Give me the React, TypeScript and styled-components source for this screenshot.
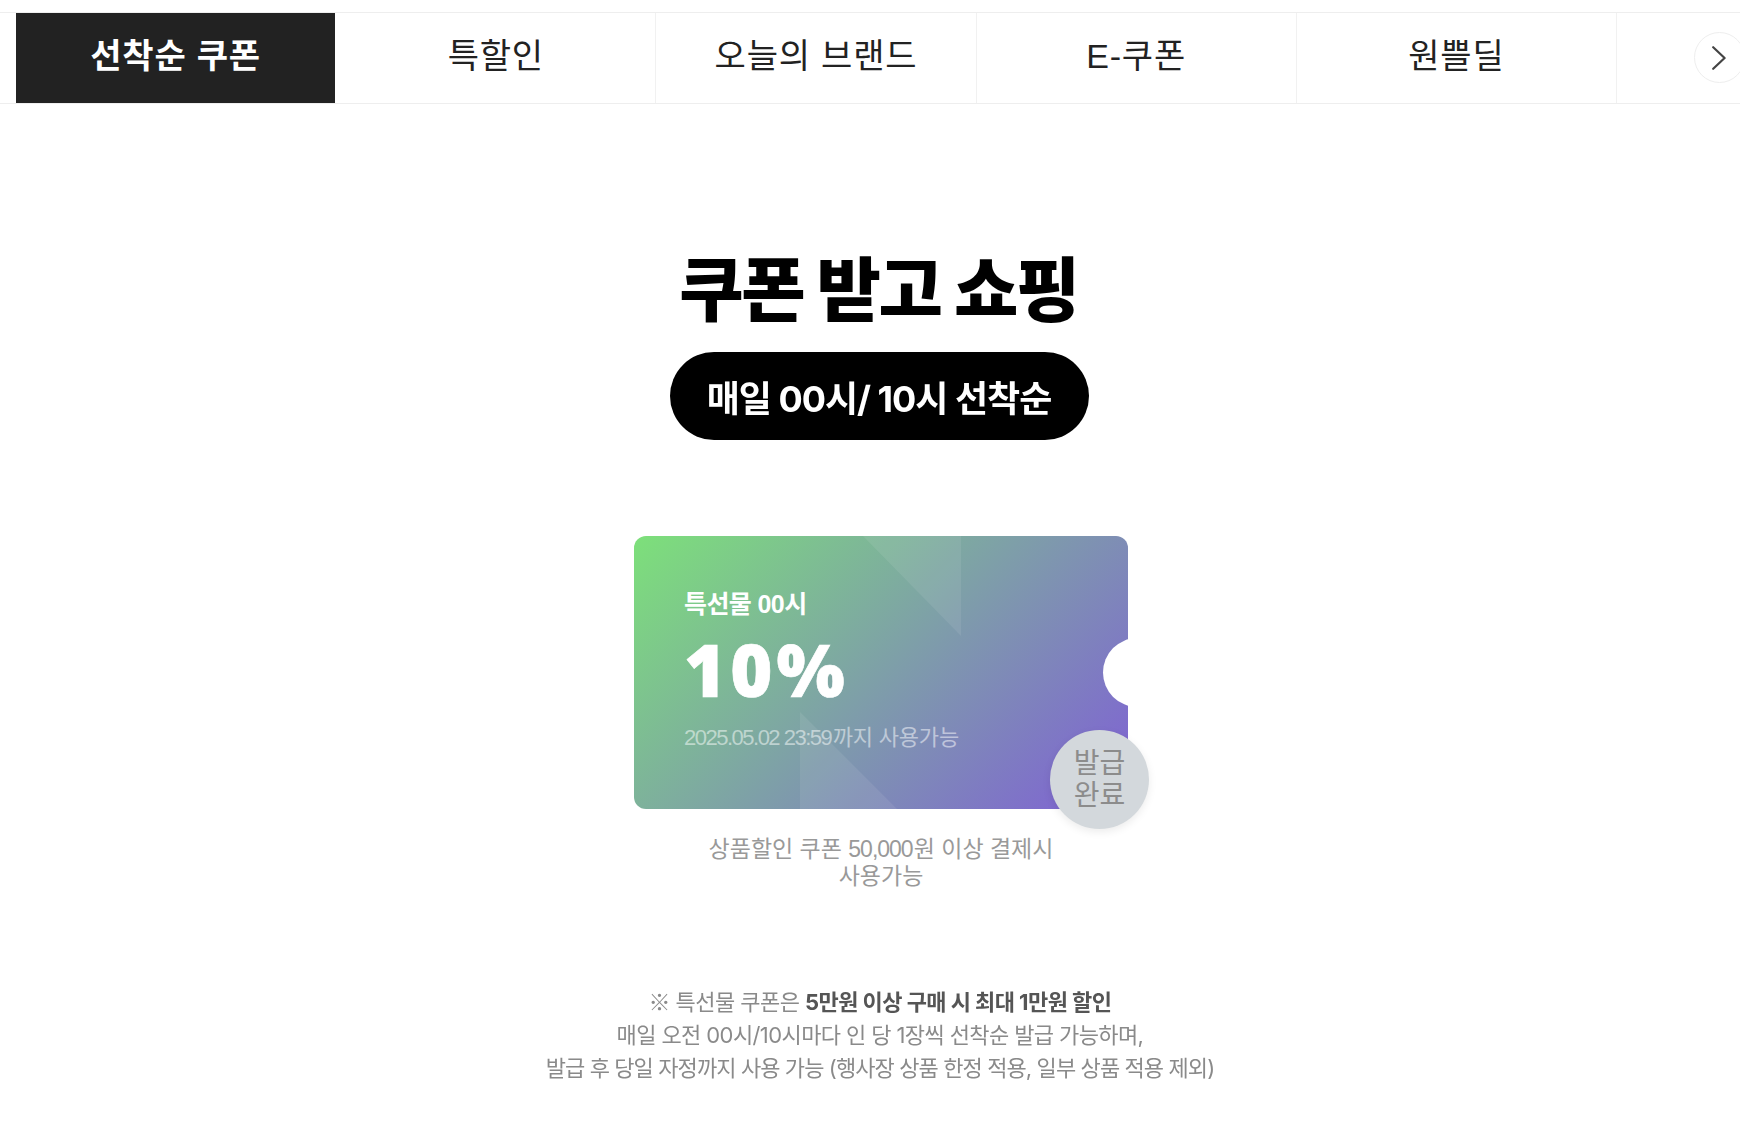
import React from "react";
import styled, { createGlobalStyle } from "styled-components";

const GlobalStyle = createGlobalStyle`
  html, body {
    margin: 0;
    padding: 0;
    background: #fff;
    overflow: hidden;
  }
  body {
    font-family: "Liberation Sans", "Noto Sans CJK KR", sans-serif;
  }
`;

const Page = styled.div`
  width: 1740px;
  height: 1130px;
  overflow: hidden;
  padding-top: 12px;
  box-sizing: border-box;
`;

const TabBar = styled.nav`
  position: relative;
  display: flex;
  height: 92px;
  box-sizing: border-box;
  padding-left: 16px;
  border-top: 1px solid #eee;
  border-bottom: 1px solid #eee;
  overflow: hidden;
`;

const Tab = styled.a<{ $active?: boolean }>`
  flex: 0 0 320.2px;
  box-sizing: border-box;
  display: flex;
  justify-content: center;
  padding-top: 21px;
  font-size: 34px;
  line-height: 44px;
  letter-spacing: 0.8px;
  color: ${(p) => (p.$active ? "#fff" : "#222")};
  font-weight: ${(p) => (p.$active ? 700 : 400)};
  background: ${(p) => (p.$active ? "#222" : "transparent")};
  background-clip: padding-box;
  border-right: 1px solid ${(p) => (p.$active ? "#fff" : "#f1f1f1")};
`;

const NextButton = styled.button`
  position: absolute;
  left: 1694px;
  top: 19px;
  width: 51px;
  height: 51px;
  padding: 0 0 0 6px;
  border: 1px solid #eee;
  border-radius: 50%;
  background: #fff;
  display: flex;
  align-items: center;
  justify-content: flex-start;
  svg {
    display: block;
    margin-left: 11px;
  }
`;

const Main = styled.main`
  display: flex;
  flex-direction: column;
  align-items: center;
  padding-left: 20px;
`;

const Heading = styled.h1`
  margin: 140px 3px 0 0;
  font-family: "Noto Sans CJK KR", sans-serif;
  font-size: 70px;
  line-height: 84px;
  font-weight: 900;
  letter-spacing: -2.5px;
  color: #000;
  filter: blur(0.5px);
`;

const Pill = styled.div`
  margin: 24px 2px 0 0;
  width: 419px;
  height: 88px;
  border-radius: 44px;
  background: #000;
  color: #fff;
  display: flex;
  align-items: center;
  justify-content: center;
  font-family: Inter, "Noto Sans CJK KR", sans-serif;
  font-size: 36px;
  font-weight: 700;
  letter-spacing: -1px;
  filter: blur(0.4px);
`;

const TicketWrap = styled.div`
  position: relative;
  margin: 96px 0 0 2px;
  width: 494px;
  height: 273px;
`;

const Ticket = styled.div`
  position: relative;
  box-sizing: border-box;
  width: 100%;
  height: 100%;
  padding: 51px 0 0 50px;
  border-radius: 12px;
  overflow: hidden;
  color: #fff;
  background: linear-gradient(135deg, #7de07a 0%, #7f5fd6 100%);
`;

const Facet = styled.span<{ $shape: "top" | "bottom" }>`
  position: absolute;
  background: rgba(255, 255, 255, 0.08);
  ${(p) =>
    p.$shape === "top"
      ? `left: 229px; top: 0; width: 98px; height: 100px; clip-path: polygon(0 0, 100% 0, 100% 100%);`
      : `left: 166px; top: 176px; width: 97px; height: 97px; clip-path: polygon(0 0, 100% 100%, 0 100%);`}
`;

const Notch = styled.span`
  position: absolute;
  left: 469px;
  top: 102px;
  width: 69px;
  height: 69px;
  border-radius: 50%;
  background: #fff;
`;

const TicketLabel = styled.div`
  position: relative;
  font-size: 25px;
  line-height: 34px;
  font-weight: 700;
  letter-spacing: -0.6px;
`;

const Discount = styled.div`
  position: relative;
  margin-top: 9px;
  font-family: "Open Sans", "Liberation Sans", sans-serif;
  font-size: 72px;
  line-height: 78px;
  font-weight: 800;
  letter-spacing: 4px;
  -webkit-text-stroke: 0.6px #fff;
`;

const Expiry = styled.div`
  position: relative;
  margin-top: 15px;
  font-size: 22px;
  line-height: 30px;
  letter-spacing: -0.2px;
  color: rgba(255, 255, 255, 0.5);
`;

const Digits = styled.span<{ $tight: number }>`
  letter-spacing: -${(p) => p.$tight}px;
  margin-right: ${(p) => p.$tight}px;
`;

const Stamp = styled.div`
  position: absolute;
  left: 416px;
  top: 194px;
  width: 99px;
  height: 99px;
  border-radius: 50%;
  background: #d3d8dc;
  box-shadow: 0 3px 8px rgba(0, 0, 0, 0.08);
  color: #8c8c8c;
  font-size: 28px;
  line-height: 32px;
  text-align: center;
  display: flex;
  align-items: center;
  justify-content: center;
`;

const Condition = styled.p`
  margin: 27px 0 0 2px;
  width: 360px;
  font-size: 23px;
  line-height: 27px;
  color: #999;
  text-align: center;
`;

const Notice = styled.div`
  margin-top: 94px;
  font-family: Inter, "Noto Sans CJK KR", sans-serif;
  font-size: 22px;
  line-height: 33px;
  color: #8a8a8a;
  text-align: center;
  filter: blur(0.6px);
  strong {
    font-weight: 700;
    color: #555;
  }
`;

const NoticeLine = styled.div<{ $spacing: number }>`
  letter-spacing: ${(p) => p.$spacing}px;
`;

const Mark = styled.span`
  font-family: "Noto Sans CJK KR", sans-serif;
`;

const tabs = ["선착순 쿠폰", "특할인", "오늘의 브랜드", "E-쿠폰", "원쁠딜"];

export default function App() {
  return (
    <Page>
      <GlobalStyle />
      <TabBar>
        {tabs.map((t, i) => (
          <Tab key={t} $active={i === 0}>
            {t}
          </Tab>
        ))}
        <NextButton aria-label="next">
          <svg width="14" height="24" viewBox="0 0 14 24" fill="none">
            <path
              d="M1.2 1.2L12.6 12L1.2 22.8"
              stroke="#444"
              strokeWidth="2.2"
              strokeLinecap="round"
              strokeLinejoin="round"
            />
          </svg>
        </NextButton>
      </TabBar>
      <Main>
        <Heading>쿠폰 받고 쇼핑</Heading>
        <Pill>매일 00시/ 10시 선착순</Pill>
        <TicketWrap>
          <Ticket>
            <Facet $shape="top" />
            <Facet $shape="bottom" />
            <Notch />
            <TicketLabel>특선물 00시</TicketLabel>
            <Discount>10%</Discount>
            <Expiry>
              <Digits $tight={1.5}>2025.05.02 23:59</Digits>까지 사용가능
            </Expiry>
          </Ticket>
          <Stamp>
            발급
            <br />
            완료
          </Stamp>
        </TicketWrap>
        <Condition>
          상품할인 쿠폰 <Digits $tight={1}>50,000</Digits>원 이상 결제시 사용가능
        </Condition>
        <Notice>
          <NoticeLine $spacing={-0.55}>
            <Mark>※</Mark> 특선물 쿠폰은 <strong>5만원 이상 구매 시 최대 1만원 할인</strong>
          </NoticeLine>
          <NoticeLine $spacing={-0.6}>
            매일 오전 00시/10시마다 인 당 1장씩 선착순 발급 가능하며,
          </NoticeLine>
          <NoticeLine $spacing={-0.9}>
            발급 후 당일 자정까지 사용 가능 (행사장 상품 한정 적용, 일부 상품 적용 제외)
          </NoticeLine>
        </Notice>
      </Main>
    </Page>
  );
}
